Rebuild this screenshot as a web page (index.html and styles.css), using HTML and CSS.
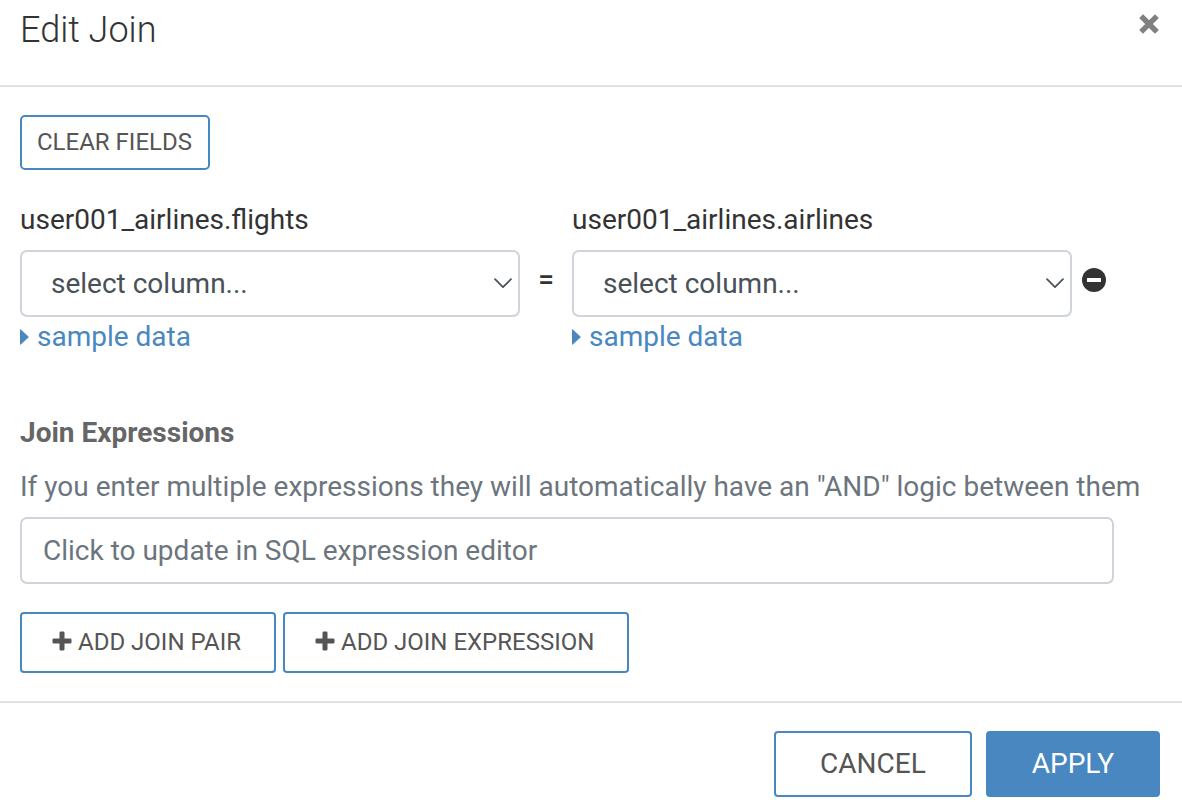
FILE: index.html
```html
<!DOCTYPE html>
<html lang="en">
<head>
<meta charset="utf-8">
<meta name="viewport" content="width=device-width, initial-scale=1">
<title>Edit Join</title>
<link rel="stylesheet" href="styles.css">
</head>
<body>
<main class="dialog">
  <header class="dialog-header">
    <h1 class="dialog-title">Edit Join</h1>
    <button class="icon-button close" type="button" aria-label="Close">
      <svg width="20" height="20" viewBox="0 0 20 20" aria-hidden="true"><path d="M4 4L16 16M16 4L4 16" stroke="currentColor" stroke-width="5.4" stroke-linecap="square" stroke-linejoin="round"/></svg>
    </button>
  </header>

  <form class="dialog-body">
    <button class="button button-clear" type="button">CLEAR FIELDS</button>

    <div class="pair">
      <div class="field">
        <label class="field-label" for="left-column">user001_airlines.flights</label>
        <div class="select-wrap">
          <select class="control select" id="left-column"><option>select column...</option></select>
          <svg class="chevron" width="18" height="11" viewBox="0 0 18 11" aria-hidden="true"><path d="M1 1.2L9 9.2L17 1.2" fill="none" stroke="currentColor" stroke-width="1.7" stroke-linecap="round" stroke-linejoin="round"/></svg>
        </div>
        <a class="sample" href="#left-sample"><svg width="9" height="16" viewBox="0 0 9 16" aria-hidden="true"><path d="M0 0.8Q0 0 0.8 0.5L8.4 7.4Q9 8 8.4 8.6L0.8 15.5Q0 16 0 15.2Z" fill="currentColor"/></svg>sample data</a>
      </div>
      <span class="equals">=</span>
      <div class="field">
        <label class="field-label" for="right-column">user001_airlines.airlines</label>
        <div class="select-wrap">
          <select class="control select" id="right-column"><option>select column...</option></select>
          <svg class="chevron" width="18" height="11" viewBox="0 0 18 11" aria-hidden="true"><path d="M1 1.2L9 9.2L17 1.2" fill="none" stroke="currentColor" stroke-width="1.7" stroke-linecap="round" stroke-linejoin="round"/></svg>
        </div>
        <a class="sample" href="#right-sample"><svg width="9" height="16" viewBox="0 0 9 16" aria-hidden="true"><path d="M0 0.8Q0 0 0.8 0.5L8.4 7.4Q9 8 8.4 8.6L0.8 15.5Q0 16 0 15.2Z" fill="currentColor"/></svg>sample data</a>
      </div>
      <button class="icon-button remove" type="button" aria-label="Remove join pair">
        <svg width="24" height="24" viewBox="0 0 24 24" aria-hidden="true"><circle cx="12" cy="12" r="12" fill="currentColor"/><rect x="5" y="10" width="14" height="4" rx="0.5" fill="#fff"/></svg>
      </button>
    </div>

    <section class="expressions">
      <h2 class="section-title"><label for="expression">Join Expressions</label></h2>
      <p class="note">If you enter multiple expressions they will automatically have an "AND" logic between them</p>
      <input class="control expression" id="expression" type="text" placeholder="Click to update in SQL expression editor">
    </section>

    <div class="add-actions">
      <button class="button button-add" type="button"><svg class="plus" width="20" height="20" viewBox="0 0 20 20" aria-hidden="true"><path d="M8.8 0.5H11.2Q12.5 0.5 12.5 1.8V7.5H18.2Q19.5 7.5 19.5 8.8V11.2Q19.5 12.5 18.2 12.5H12.5V18.2Q12.5 19.5 11.2 19.5H8.8Q7.5 19.5 7.5 18.2V12.5H1.8Q0.5 12.5 0.5 11.2V8.8Q0.5 7.5 1.8 7.5H7.5V1.8Q7.5 0.5 8.8 0.5Z" fill="currentColor"/></svg>ADD JOIN PAIR</button>
      <button class="button button-add" type="button"><svg class="plus" width="20" height="20" viewBox="0 0 20 20" aria-hidden="true"><path d="M8.8 0.5H11.2Q12.5 0.5 12.5 1.8V7.5H18.2Q19.5 7.5 19.5 8.8V11.2Q19.5 12.5 18.2 12.5H12.5V18.2Q12.5 19.5 11.2 19.5H8.8Q7.5 19.5 7.5 18.2V12.5H1.8Q0.5 12.5 0.5 11.2V8.8Q0.5 7.5 1.8 7.5H7.5V1.8Q7.5 0.5 8.8 0.5Z" fill="currentColor"/></svg>ADD JOIN EXPRESSION</button>
    </div>
  </form>

  <footer class="dialog-footer">
    <button class="button button-large" type="button">CANCEL</button>
    <button class="button button-large button-primary" type="button">APPLY</button>
  </footer>
</main>
</body>
</html>
```
FILE: styles.css
```css
* {
  box-sizing: border-box;
}

body {
  margin: 0;
  background: #fff;
  color: #333;
  font-family: Roboto, "Liberation Sans", sans-serif;
  font-size: 28px;
  line-height: 40px;
}

h1,
h2,
p {
  margin: 0;
}

.dialog-header {
  display: flex;
  justify-content: space-between;
  align-items: flex-start;
  padding: 8px 23px 33px 20px;
  border-bottom: 2px solid #dee2e6;
}

.dialog-title {
  font-size: 36px;
  font-weight: 300;
  line-height: 44px;
}

.icon-button {
  display: flex;
  padding: 0;
  border: 0;
  background: none;
  color: #333;
  cursor: pointer;
}

.close {
  margin-top: 6px;
  color: #808080;
}

.dialog-body {
  padding: 28px 20px;
}

.button {
  border: 2px solid #4987c0;
  border-radius: 4px;
  background: #fff;
  color: #555;
  font-family: inherit;
  font-size: 24px;
  line-height: 32px;
  white-space: nowrap;
  cursor: pointer;
}

.button-clear {
  display: block;
  padding: 9px 16px 10px 15px;
  border-radius: 5px;
}

.pair {
  display: grid;
  grid-template-columns: minmax(0, 1fr) 52px minmax(0, 1fr) auto;
  margin: 30px 56px 0 0;
}

.field {
  display: flex;
  flex-direction: column;
  align-items: flex-start;
}

.field-label {
  margin-bottom: 10px;
}

.select-wrap {
  display: grid;
  align-items: center;
  align-self: stretch;
}

.select-wrap > * {
  grid-area: 1 / 1;
}

.control {
  width: 100%;
  height: 67px;
  border: 2px solid #ced4da;
  border-radius: 7px;
  background: #fff;
  color: #495057;
  font: inherit;
}

.select {
  appearance: none;
  padding: 0 40px 0 29px;
}

.chevron {
  justify-self: end;
  margin-right: 8px;
  color: #495057;
  pointer-events: none;
}

.sample {
  display: flex;
  align-items: center;
  gap: 8px;
  color: #4987c0;
  text-decoration: none;
}

.equals {
  margin-top: 60px;
  font-weight: 500;
  text-align: center;
}

.remove {
  align-self: start;
  margin: 68px 0 0 10px;
}

.expressions {
  margin-top: 56px;
}

.section-title {
  color: #666;
  font-size: 28px;
  font-weight: 700;
}

.note {
  margin: 14px 0 10px;
  color: #6c757d;
}

.expression {
  display: block;
  width: calc(100% - 48px);
  padding: 0 21px;
}

.expression::placeholder {
  color: #6c757d;
  opacity: 1;
}

.add-actions {
  display: flex;
  gap: 7px;
  margin-top: 28px;
}

.button-add {
  display: flex;
  align-items: center;
  gap: 6px;
  padding: 12px 33px 13px 30px;
}

.plus {
  margin-bottom: 2px;
}

.dialog-footer {
  display: flex;
  justify-content: flex-end;
  gap: 14px;
  padding: 28px 22px 15px;
  border-top: 2px solid #dee2e6;
}

.button-large {
  padding: 11px 44px;
  font-size: 28px;
  line-height: 40px;
}

.button-primary {
  background: #4987c0;
  color: #fff;
}
```
